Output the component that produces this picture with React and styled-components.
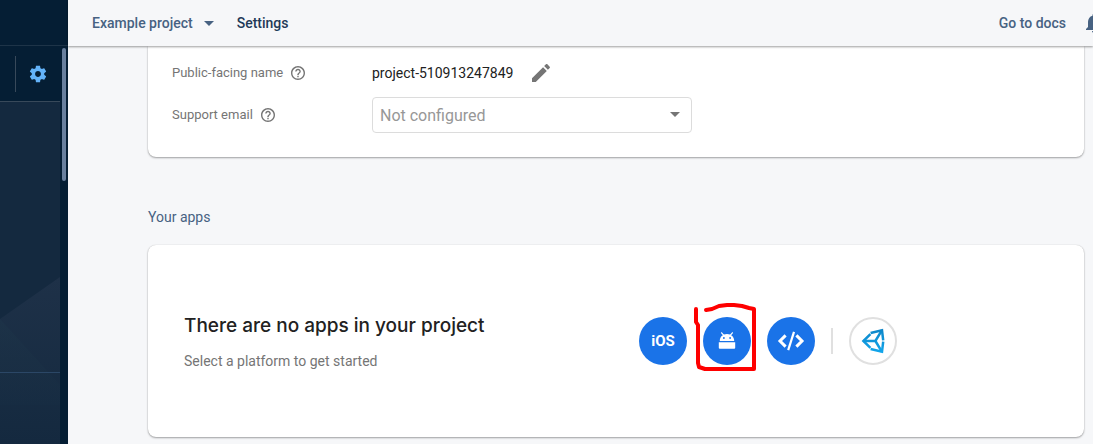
import React from "react";
import styled, { createGlobalStyle } from "styled-components";

const GlobalStyle = createGlobalStyle`
  *, *::before, *::after { box-sizing: border-box; }
  body {
    margin: 0;
    background: #f6f7f9;
    font-family: Roboto, "Liberation Sans", sans-serif;
    font-size: 14px;
    line-height: 20px;
  }
  button, select { font-family: inherit; }
`;

const Page = styled.div`
  display: flex;
  min-height: 100vh;
`;

/* Side navigation */

const Sidebar = styled.nav`
  flex: 0 0 68px;
  display: flex;
  flex-direction: column;
  background: #051e34;
`;

const SidebarTop = styled.div`
  height: 46px;
  border-bottom: 1px solid #1e3448;
`;

const SidebarScroller = styled.div`
  flex: 1;
  display: flex;
`;

const SidebarContent = styled.div`
  flex: 1;
  display: flex;
  flex-direction: column;
`;

const SettingsRow = styled.div`
  display: flex;
  align-items: center;
  justify-content: flex-end;
  height: 56px;
  border-bottom: 1px solid #38495a;
`;

const SettingsLink = styled.a`
  display: flex;
  align-items: center;
  justify-content: center;
  width: 45px;
  height: 36px;
  border-left: 1px solid #38495a;
  color: #63b3f9;
`;

const SidebarMenu = styled.div`
  position: relative;
  flex: 1;
  display: flex;
  flex-direction: column;
  justify-content: flex-end;
  background: #14293f;
`;

const Facets = styled.svg`
  position: absolute;
  left: 0;
  bottom: 0;
`;

const SidebarFooter = styled.div`
  position: relative;
  height: 72px;
  border-top: 1px solid #2b4766;
`;

const ScrollTrack = styled.div`
  flex: 0 0 8px;
  padding: 2px;
`;

const ScrollThumb = styled.div`
  height: 133px;
  border-radius: 2px;
  background: #69809e;
`;

/* Top bar */

const Content = styled.div`
  flex: 1;
  min-width: 0;
`;

const TopBar = styled.header`
  position: relative;
  display: flex;
  align-items: center;
  height: 46px;
  padding-left: 24px;
  background: #f6f7f9;
  box-shadow: 0 1px 2px rgba(0, 0, 0, 0.38);
  overflow: hidden;
  font-weight: 500;
  color: #476282;
  white-space: nowrap;
`;

const ProjectButton = styled.button`
  display: flex;
  align-items: center;
  gap: 11px;
  padding: 0;
  border: 0;
  background: none;
  color: inherit;
  font-size: 14px;
  font-weight: 500;
  line-height: 20px;
`;

const Caret = styled.span`
  border: 5px solid transparent;
  border-top-color: currentColor;
  border-bottom: 0;
`;

const CurrentPage = styled.span`
  margin-left: 23px;
  color: #1f3a57;
`;

const TopActions = styled.div`
  display: flex;
  align-items: center;
  gap: 16px;
  margin-left: auto;
  margin-right: -13px;
`;

const DocsLink = styled.a`
  color: inherit;
  text-decoration: none;
`;

const IconButton = styled.button`
  display: flex;
  padding: 0;
  border: 0;
  background: none;
  color: ${(p) => p.$color};
`;

/* Settings cards */

const Main = styled.main`
  padding: 0 9px 7px 80px;
`;

const Card = styled.section`
  background: #fff;
  border-radius: ${(p) => (p.$attached ? "0 0 8px 8px" : "8px")};
  box-shadow: 0 1px 2px rgba(0, 0, 0, 0.34), 0 0 1px rgba(0, 0, 0, 0.2);
`;

const PublicSettings = styled(Card)`
  display: flex;
  flex-direction: column;
  gap: 6px;
  padding: 9px 24px 24px;
`;

const Field = styled.div`
  display: flex;
  align-items: center;
  height: 36px;
`;

const FieldLabel = styled.div`
  flex: 0 0 200px;
  display: flex;
  align-items: center;
  gap: 8px;
  font-size: 13px;
  color: #757575;
`;

const FieldValue = styled.output`
  margin-right: 16px;
  color: #212121;
`;

const SelectBox = styled.div`
  position: relative;
  flex: 0 1 320px;
  display: flex;
  color: #757575;

  ${Caret} {
    position: absolute;
    right: 12px;
    top: 15px;
    pointer-events: none;
  }
`;

const Select = styled.select`
  appearance: none;
  width: 100%;
  height: 36px;
  padding: 0 32px 0 7px;
  border: 1px solid #dcdcdc;
  border-radius: 4px;
  background: #fff;
  color: #979797;
  font-size: 16px;
`;

const SectionTitle = styled.h2`
  margin: 50px 0 18px;
  font-size: 14px;
  font-weight: 400;
  line-height: 20px;
  color: #476282;
`;

const EmptyState = styled(Card)`
  display: flex;
  align-items: center;
  min-height: 192px;
  padding: 0 36px;
`;

const EmptyText = styled.div`
  flex: 0 1 455px;
`;

const EmptyTitle = styled.h3`
  margin: 0 0 10px;
  font-family: Inter, Roboto, sans-serif;
  font-size: 19px;
  font-weight: 500;
  line-height: 30px;
  color: #212121;
`;

const EmptyHint = styled.p`
  margin: 0;
  color: #757575;
`;

const Platforms = styled.div`
  display: flex;
  align-items: center;
  gap: 16px;
`;

const PlatformButton = styled.button`
  display: flex;
  align-items: center;
  justify-content: center;
  width: 48px;
  height: 48px;
  padding: 0;
  border: ${(p) => (p.$outlined ? "2px solid #e0e0e0" : "0")};
  border-radius: 50%;
  background: ${(p) => (p.$outlined ? "#fff" : "#1a73e8")};
  color: #fff;
`;

const IosMark = styled.span`
  font-size: 15px;
  font-weight: 700;
`;

const PlatformDivider = styled.div`
  width: 2px;
  height: 26px;
  background: #e0e0e0;
`;

const Highlighted = styled.div`
  position: relative;
`;

const Scribble = styled.svg`
  position: absolute;
  left: -12px;
  top: -16px;
  pointer-events: none;
`;

function MaterialIcon({ d, size, viewBox = "0 0 24 24" }) {
  return (
    <svg width={size} height={size} viewBox={viewBox} fill="currentColor" aria-hidden="true">
      <path d={d} />
    </svg>
  );
}

const GEAR =
  "M19.43 12.98c.04-.32.07-.64.07-.98s-.03-.66-.07-.98l2.11-1.65c.19-.15.24-.42.12-.64l-2-3.46c-.12-.22-.39-.3-.61-.22l-2.49 1c-.52-.4-1.08-.73-1.69-.98l-.38-2.65C14.46 2.18 14.25 2 14 2h-4c-.25 0-.46.18-.49.42l-.38 2.65c-.61.25-1.17.59-1.69.98l-2.49-1c-.23-.09-.49 0-.61.22l-2 3.46c-.13.22-.07.49.12.64l2.11 1.65c-.04.32-.07.65-.07.98s.03.66.07.98l-2.11 1.65c-.19.15-.24.42-.12.64l2 3.46c.12.22.39.3.61.22l2.49-1c.52.4 1.08.73 1.69.98l.38 2.65c.03.24.24.42.49.42h4c.25 0 .46-.18.49-.42l.38-2.65c.61-.25 1.17-.59 1.69-.98l2.49 1c.23.09.49 0 .61-.22l2-3.46c.12-.22.07-.49-.12-.64l-2.11-1.65zM12 15.5c-1.93 0-3.5-1.57-3.5-3.5s1.57-3.5 3.5-3.5 3.5 1.57 3.5 3.5-1.57 3.5-3.5 3.5z";
const BELL =
  "M12 22c1.1 0 2-.9 2-2h-4c0 1.1.89 2 2 2zm6-6v-5c0-3.07-1.64-5.64-4.5-6.32V4c0-.83-.67-1.5-1.5-1.5s-1.5.67-1.5 1.5v.68C7.63 5.36 6 7.92 6 11v5l-2 2v1h16v-1l-2-2z";
const HELP =
  "M11 18h2v-2h-2v2zm1-16C6.48 2 2 6.48 2 12s4.48 10 10 10 10-4.48 10-10S17.52 2 12 2zm0 18c-4.41 0-8-3.59-8-8s3.59-8 8-8 8 3.59 8 8-3.59 8-8 8zm0-14c-2.21 0-4 1.79-4 4h2c0-1.1.9-2 2-2s2 .9 2 2c0 2-3 1.75-3 5h2c0-2.25 3-2.5 3-5 0-2.21-1.79-4-4-4z";
const PENCIL =
  "M3 17.25V21h3.75L17.81 9.94l-3.75-3.75L3 17.25zM20.71 7.04c.39-.39.39-1.02 0-1.41l-2.34-2.34c-.39-.39-1.02-.39-1.41 0l-1.83 1.83 3.75 3.75 1.83-1.83z";

function HelpButton({ label }) {
  return (
    <IconButton type="button" $color="#757575" aria-label={label}>
      <MaterialIcon d={HELP} size={14} viewBox="2 2 20 20" />
    </IconButton>
  );
}

function AndroidIcon() {
  return (
    <svg width="18" height="18" viewBox="0 0 18 18" aria-hidden="true">
      <path
        d="M3.6.8 5.8 3.4M14.4.8l-2.2 2.6"
        stroke="#fff"
        strokeWidth="1.2"
        strokeLinecap="round"
      />
      <path
        fill="#fff"
        fillRule="evenodd"
        d="M1.8 9C1.8 5 4.6 2 9 2s7.2 3 7.2 7zM5.9 5.1a.9.9 0 1 0 0 1.8.9.9 0 0 0 0-1.8zm6.2 0a.9.9 0 1 0 0 1.8.9.9 0 0 0 0-1.8z"
      />
      <path fill="#fff" d="M.8 10.2h16.4v5.6a1 1 0 0 1-1 1H1.8a1 1 0 0 1-1-1z" />
    </svg>
  );
}

function CodeIcon() {
  return (
    <svg width="28" height="20" viewBox="0 0 28 20" fill="none" stroke="#fff" strokeWidth="3" aria-hidden="true">
      <path d="M8.6 4.4 3 10l5.6 5.6M19.4 4.4 25 10l-5.6 5.6" />
      <path d="M17 .8 11.2 19.2" strokeWidth="2.2" />
    </svg>
  );
}

function UnityIcon() {
  return (
    <svg width="24" height="26" viewBox="0 0 24 26" fill="none" strokeWidth="2.5" aria-hidden="true">
      <defs>
        <linearGradient id="unityBlue" x1="0" y1="0" x2="0" y2="26" gradientUnits="userSpaceOnUse">
          <stop offset="0" stopColor="#0d84c6" />
          <stop offset="1" stopColor="#12a8ee" />
        </linearGradient>
      </defs>
      <g stroke="url(#unityBlue)">
        <path d="M9.4 6.2 2.4 13l7 6.8" />
        <path d="M9.6 5 21 2.2l1.2 10.2" />
        <path d="M9.6 21 21 23.8l1.2-10.2" />
        <path d="M2.4 13h12L21 2.2M14.4 13 21 23.8" />
      </g>
    </svg>
  );
}

export default function App() {
  return (
    <>
      <GlobalStyle />
      <Page>
        <Sidebar aria-label="Project navigation">
          <SidebarTop />
          <SidebarScroller>
            <SidebarContent>
              <SettingsRow>
                <SettingsLink href="#settings" aria-label="Project settings">
                  <MaterialIcon d={GEAR} size={20} />
                </SettingsLink>
              </SettingsRow>
              <SidebarMenu>
                <Facets width="60" height="168" viewBox="0 0 60 168" aria-hidden="true">
                  <defs>
                    <linearGradient id="facetFade" x1="0" y1="0" x2="0" y2="1">
                      <stop offset="0" stopColor="#1e3148" />
                      <stop offset="1" stopColor="#14293f" />
                    </linearGradient>
                    <linearGradient id="facetGreen" x1="0" y1="0" x2="0" y2="1">
                      <stop offset="0" stopColor="#1e3549" />
                      <stop offset="1" stopColor="#172d43" />
                    </linearGradient>
                  </defs>
                  <path d="M0 43 60 1v167H0z" fill="url(#facetFade)" />
                  <path d="M0 43 60 109v20H0z" fill="url(#facetGreen)" opacity="0.5" />
                </Facets>
                <SidebarFooter />
              </SidebarMenu>
            </SidebarContent>
            <ScrollTrack>
              <ScrollThumb />
            </ScrollTrack>
          </SidebarScroller>
        </Sidebar>

        <Content>
          <TopBar>
            <ProjectButton type="button">
              Example project
              <Caret />
            </ProjectButton>
            <CurrentPage>Settings</CurrentPage>
            <TopActions>
              <DocsLink href="#docs">Go to docs</DocsLink>
              <IconButton type="button" $color="#476282" aria-label="Notifications">
                <MaterialIcon d={BELL} size={24} />
              </IconButton>
            </TopActions>
          </TopBar>

          <Main>
            <PublicSettings $attached>
              <Field>
                <FieldLabel>
                  <label htmlFor="public-name">Public-facing name</label>
                  <HelpButton label="About the public-facing name" />
                </FieldLabel>
                <FieldValue id="public-name">project-510913247849</FieldValue>
                <IconButton type="button" $color="#757575" aria-label="Edit name">
                  <MaterialIcon d={PENCIL} size={24} />
                </IconButton>
              </Field>
              <Field>
                <FieldLabel>
                  <label htmlFor="support-email">Support email</label>
                  <HelpButton label="About the support email" />
                </FieldLabel>
                <SelectBox>
                  <Select id="support-email">
                    <option>Not configured</option>
                  </Select>
                  <Caret />
                </SelectBox>
              </Field>
            </PublicSettings>

            <SectionTitle>Your apps</SectionTitle>

            <EmptyState>
              <EmptyText>
                <EmptyTitle>There are no apps in your project</EmptyTitle>
                <EmptyHint>Select a platform to get started</EmptyHint>
              </EmptyText>
              <Platforms>
                <PlatformButton type="button">
                  <IosMark>iOS</IosMark>
                </PlatformButton>
                <Highlighted>
                  <PlatformButton type="button" aria-label="Android">
                    <AndroidIcon />
                  </PlatformButton>
                  <Scribble
                    width="70"
                    height="74"
                    viewBox="0 0 70 74"
                    fill="none"
                    stroke="#fe0000"
                    strokeWidth="4"
                    strokeLinecap="round"
                    strokeLinejoin="round"
                    aria-hidden="true"
                  >
                    <path d="M5 8v13l2 3v38l1 4 6 2h49V8l-5-1-7-2-8-1h-7l-8 1-7 3-6 1" />
                  </Scribble>
                </Highlighted>
                <PlatformButton type="button" aria-label="Web">
                  <CodeIcon />
                </PlatformButton>
                <PlatformDivider />
                <PlatformButton type="button" $outlined aria-label="Unity">
                  <UnityIcon />
                </PlatformButton>
              </Platforms>
            </EmptyState>
          </Main>
        </Content>
      </Page>
    </>
  );
}
